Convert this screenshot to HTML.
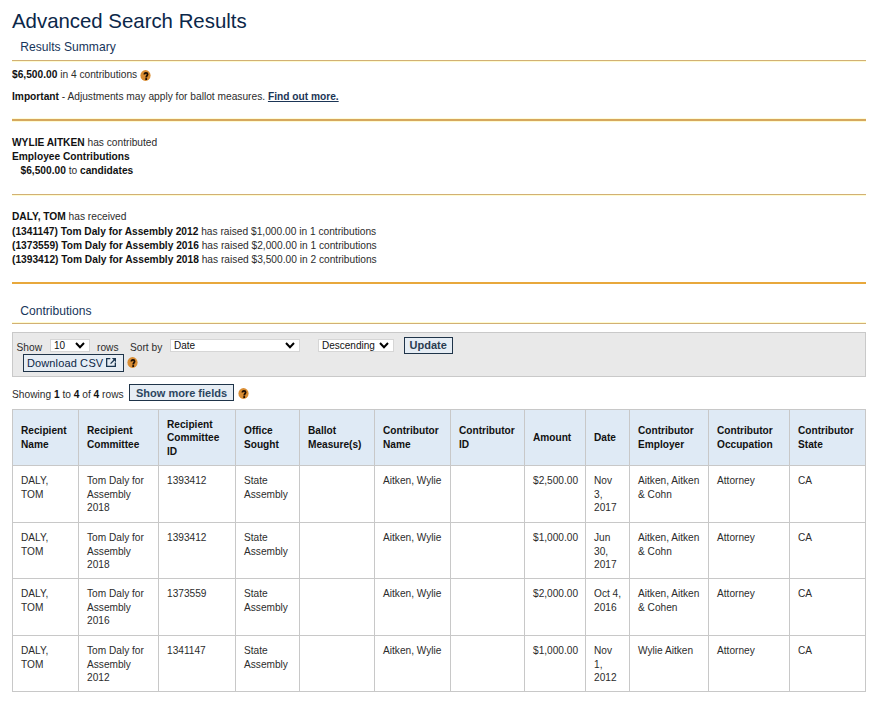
<!DOCTYPE html>
<html><head><meta charset="utf-8">
<style>
*{box-sizing:border-box;margin:0;padding:0}
html,body{width:878px;height:702px;overflow:hidden;background:#fff}
body{font-family:"Liberation Sans",sans-serif;font-size:10.2px;color:#2c2c2c;position:relative}
.a{position:absolute;white-space:nowrap;line-height:14px}
b{font-weight:bold;color:#111}
.h1{left:12px;top:8px;font-size:20.4px;line-height:26px;color:#0b2749}
.h2{left:20.3px;font-size:12.1px;line-height:16px;color:#17355a}
.hr{position:absolute;left:12px;width:854px;height:1px;background:#d2b074}
.hr2{height:2px;background:#d6a85e}
.hr4{height:2px;background:#e8a83c}
.qi{position:absolute}
.q{display:inline-block;width:10.5px;height:10.5px;border-radius:50%;background:#d08a2e;color:#111;font-weight:bold;font-size:9px;line-height:11px;text-align:center;vertical-align:middle;position:relative;top:-1px}
.box{position:absolute;left:12px;top:332px;width:854px;height:45px;background:#e9e9e9;border:1px solid #c9c9c9}
.sel{position:absolute;top:339px;height:13px;background:#fff;border:1px solid #d6d6d6;font-size:10px;line-height:11px;padding-left:3px;color:#111}
.chev{position:absolute;top:2px;width:10px;height:6.5px}
.btn{position:absolute;border:1px solid #1f3449;background:#e6edf4;color:#1d3c62;font-size:11px;font-weight:bold;white-space:nowrap}
table{position:absolute;left:12px;top:409px;border-collapse:collapse;table-layout:fixed;width:853px}
td,th{border:1px solid #c8c8c8;padding:7.5px 7px 7.5px 8px;vertical-align:top;text-align:left;font-size:10.15px;line-height:13.5px;color:#2c2c2c;font-weight:normal}
th{background:#dfeaf5;font-weight:bold;color:#111;vertical-align:middle;height:55.5px;padding-bottom:6.5px}
td{height:56.5px;padding-top:8.8px;padding-bottom:4.5px}
tr.r1 td,tr.r3 td{height:57px}
tr.r2 td{height:56px}
tr.r4 td{height:56px}
</style></head><body>
<div class="a h1">Advanced Search Results</div>
<div class="a h2" style="top:39px">Results Summary</div>
<div class="hr" style="top:60px;box-shadow:0 1px 0 #fffcd0"></div>
<div class="a" style="left:12px;top:68px"><b>$6,500.00</b> in 4 contributions</div><svg class="qi" style="left:140.1px;top:70px" width="11" height="11" viewBox="0 0 11 11"><ellipse cx="5.5" cy="5.5" rx="5.1" ry="5.4" fill="#d98d33"/><path d="M4.4 4.5 C4.4 3.2 5.1 2.8 6.0 2.8 C7.0 2.8 7.6 3.4 7.6 4.3 C7.6 5.5 6.2 5.7 6.2 7.4" fill="none" stroke="#1a0c02" stroke-width="1.75"/><rect x="5.3" y="8.1" width="1.8" height="1.9" fill="#1a0c02"/></svg>
<div class="a" style="left:12px;top:90px"><b>Important</b> - Adjustments may apply for ballot measures. <b style="text-decoration:underline;color:#1b3556">Find out more.</b></div>
<div class="hr hr2" style="top:119px;box-shadow:0 1px 0 #fffbd0,0 -1px 0 #fffcd8"></div>
<div class="a" style="left:12px;top:136px"><b>WYLIE AITKEN</b> has contributed</div>
<div class="a" style="left:12px;top:150.3px"><b>Employee Contributions</b></div>
<div class="a" style="left:20.5px;top:164.3px"><b>$6,500.00</b> to <b>candidates</b></div>
<div class="hr" style="top:194px;box-shadow:0 1px 0 #fffcd0"></div>
<div class="a" style="left:12px;top:210px"><b>DALY, TOM</b> has received</div>
<div class="a" style="left:12px;top:224.5px"><b>(1341147) Tom Daly for Assembly 2012</b> has raised $1,000.00 in 1 contributions</div>
<div class="a" style="left:12px;top:239px"><b>(1373559) Tom Daly for Assembly 2016</b> has raised $2,000.00 in 1 contributions</div>
<div class="a" style="left:12px;top:253.2px"><b>(1393412) Tom Daly for Assembly 2018</b> has raised $3,500.00 in 2 contributions</div>
<div class="hr hr4" style="top:282px"></div>
<div class="a h2" style="top:303px">Contributions</div>
<div class="hr" style="top:323px;box-shadow:0 -1px 0 #fffcd0"></div>

<div class="box"></div>
<div class="a" style="left:16.5px;top:340.6px">Show</div>
<div class="sel" style="left:50px;width:40px">10<svg class="chev" style="left:24px" viewBox="0 0 10 6.5"><path d="M1 1 L5 5.2 L9 1" fill="none" stroke="#000" stroke-width="2"/></svg></div>
<div class="a" style="left:97px;top:340.6px">rows</div>
<div class="a" style="left:130px;top:340.6px">Sort by</div>
<div class="sel" style="left:170px;width:130px">Date<svg class="chev" style="left:114px" viewBox="0 0 10 6.5"><path d="M1 1 L5 5.2 L9 1" fill="none" stroke="#000" stroke-width="2"/></svg></div>
<div class="sel" style="left:318px;width:76px">Descending<svg class="chev" style="left:60px" viewBox="0 0 10 6.5"><path d="M1 1 L5 5.2 L9 1" fill="none" stroke="#000" stroke-width="2"/></svg></div>
<div class="btn" style="left:404px;top:337px;width:49px;height:17px;line-height:15px;padding-left:4.5px;color:#2a3c50">Update</div>
<div class="btn" style="left:23px;top:354px;width:101px;height:18px;line-height:16px;padding-left:3px;font-weight:normal;color:#0c2645"><span style="letter-spacing:0.12px">Download</span> C<span style="margin-left:0.6px"></span>SV <svg style="position:absolute;left:82px;top:3px" width="11" height="10" viewBox="0 0 11 10"><path d="M0 0 H4.3 V1.3 H1.3 V7.7 H8.7 V4.5 H10 V9 H0 Z" fill="#1a3550"/><path d="M4.6 5.6 L8.2 2.0" stroke="#1a3550" stroke-width="1.3"/><path d="M5.8 0 H10 V4.2 Z" fill="#1a3550"/></svg></div>
<svg class="qi" style="left:127px;top:357px" width="11" height="11" viewBox="0 0 11 11"><ellipse cx="5.5" cy="5.5" rx="5.1" ry="5.4" fill="#d98d33"/><path d="M4.4 4.5 C4.4 3.2 5.1 2.8 6.0 2.8 C7.0 2.8 7.6 3.4 7.6 4.3 C7.6 5.5 6.2 5.7 6.2 7.4" fill="none" stroke="#1a0c02" stroke-width="1.75"/><rect x="5.3" y="8.1" width="1.8" height="1.9" fill="#1a0c02"/></svg>

<div class="a" style="left:12px;top:387.6px">Showing <b>1</b> to <b>4</b> of <b>4</b> rows</div>
<div class="btn" style="left:129px;top:384px;width:105px;height:17px;line-height:15px;padding-left:6px;padding-top:1px;color:#2b4560">Show more fields</div>
<svg class="qi" style="left:238.2px;top:388px" width="11" height="11" viewBox="0 0 11 11"><ellipse cx="5.5" cy="5.5" rx="5.1" ry="5.4" fill="#d98d33"/><path d="M4.4 4.5 C4.4 3.2 5.1 2.8 6.0 2.8 C7.0 2.8 7.6 3.4 7.6 4.3 C7.6 5.5 6.2 5.7 6.2 7.4" fill="none" stroke="#1a0c02" stroke-width="1.75"/><rect x="5.3" y="8.1" width="1.8" height="1.9" fill="#1a0c02"/></svg>

<table>
<colgroup><col style="width:66px"><col style="width:80px"><col style="width:77px"><col style="width:64px"><col style="width:75px"><col style="width:76px"><col style="width:74px"><col style="width:61px"><col style="width:44px"><col style="width:79px"><col style="width:81px"><col style="width:76px"></colgroup>
<tr><th>Recipient Name</th><th>Recipient Committee</th><th>Recipient Committee ID</th><th>Office Sought</th><th>Ballot Measure(s)</th><th>Contributor Name</th><th>Contributor ID</th><th>Amount</th><th>Date</th><th>Contributor Employer</th><th>Contributor Occupation</th><th>Contributor State</th></tr>
<tr class="r1"><td>DALY, TOM</td><td>Tom Daly for Assembly 2018</td><td>1393412</td><td>State Assembly</td><td></td><td>Aitken, Wylie</td><td></td><td>$2,500.00</td><td>Nov 3, 2017</td><td>Aitken, Aitken &amp; Cohn</td><td>Attorney</td><td>CA</td></tr>
<tr class="r2"><td>DALY, TOM</td><td>Tom Daly for Assembly 2018</td><td>1393412</td><td>State Assembly</td><td></td><td>Aitken, Wylie</td><td></td><td>$1,000.00</td><td>Jun 30, 2017</td><td>Aitken, Aitken &amp; Cohn</td><td>Attorney</td><td>CA</td></tr>
<tr class="r3"><td>DALY, TOM</td><td>Tom Daly for Assembly 2016</td><td>1373559</td><td>State Assembly</td><td></td><td>Aitken, Wylie</td><td></td><td>$2,000.00</td><td>Oct 4, 2016</td><td>Aitken, Aitken &amp; Cohen</td><td>Attorney</td><td>CA</td></tr>
<tr class="r4"><td>DALY, TOM</td><td>Tom Daly for Assembly 2012</td><td>1341147</td><td>State Assembly</td><td></td><td>Aitken, Wylie</td><td></td><td>$1,000.00</td><td>Nov 1, 2012</td><td>Wylie Aitken</td><td>Attorney</td><td>CA</td></tr>
</table>
</body></html>
